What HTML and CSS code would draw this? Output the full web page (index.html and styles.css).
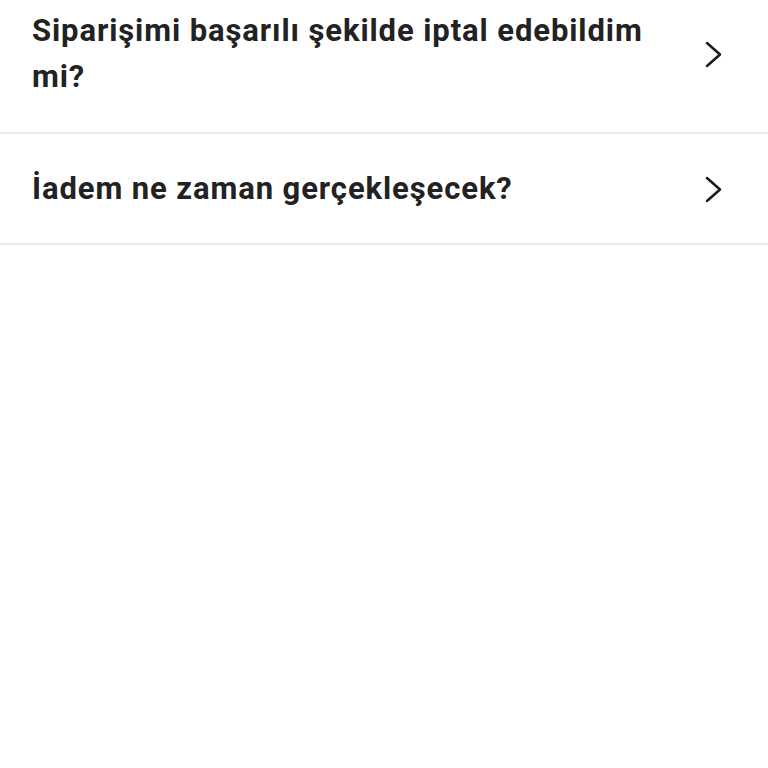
FILE: index.html
```html
<!DOCTYPE html>
<html lang="tr">
<head>
    <meta charset="UTF-8">
    <meta name="viewport" content="width=device-width, initial-scale=1.0">
    <title>Yardım</title>
    <link rel="stylesheet" href="styles.css">
</head>
<body>
    <ul class="faq-list">
        <li class="faq-item">
            <span class="faq-question">Siparişimi başarılı şekilde iptal edebildim mi?</span>
            <svg class="chevron" width="17" height="27" viewBox="0 0 17 27">
                <polyline points="2,2 15,13.5 2,25" fill="none" stroke="#1a1a1a" stroke-width="2.5" stroke-linecap="round" stroke-linejoin="round"/>
            </svg>
        </li>
        <li class="faq-item">
            <span class="faq-question">İadem ne zaman gerçekleşecek?</span>
            <svg class="chevron" width="17" height="27" viewBox="0 0 17 27">
                <polyline points="2,2 15,13.5 2,25" fill="none" stroke="#1a1a1a" stroke-width="2.5" stroke-linecap="round" stroke-linejoin="round"/>
            </svg>
        </li>
    </ul>
</body>
</html>
```

FILE: styles.css
```css
body {
    margin: 0;
    background-color: #fff;
    font-family: Roboto, "Liberation Sans", Arial, sans-serif;
    color: #222;
}
.faq-list {
    list-style: none;
    margin: -24px 0 0;
    padding: 0;
}
.faq-item {
    display: flex;
    align-items: center;
    justify-content: space-between;
    padding: 32px 46px 32px 32px;
    border-bottom: 2px solid #ececec;
}
.faq-item + .faq-item {
    padding-bottom: 31px;
}
.faq-question {
    font-size: 31px;
    font-weight: 700;
    letter-spacing: 0.9px;
    line-height: 46px;
    max-width: 630px;
}
.chevron {
    flex-shrink: 0;
}
```
